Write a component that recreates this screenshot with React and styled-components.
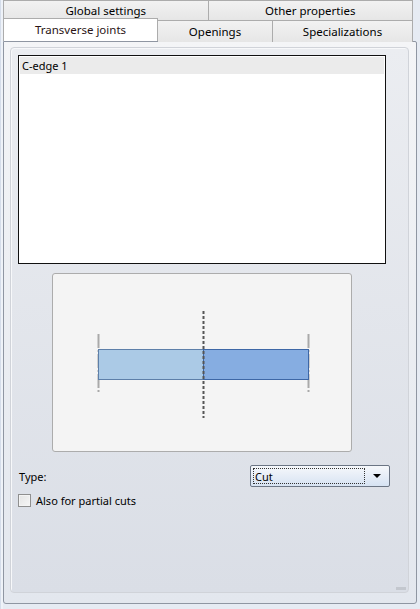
import styled, { createGlobalStyle } from 'styled-components';

const Global = createGlobalStyle`
  html, body { margin: 0; padding: 0; }
  body {
    width: 420px;
    height: 609px;
    overflow: hidden;
    background: #e4e9f2;
    font-family: "Noto Sans", "Open Sans", sans-serif;
    font-size: 11px;
    color: #000;
  }
`;

const Window = styled.div`
  width: 420px;
  height: 609px;
  box-sizing: border-box;
  padding: 0 3px 5px 3px;
  display: flex;
  flex-direction: column;
  background: linear-gradient(to right, #d5ddea 0, #d5ddea 1px, #eef2f8 1px, #eef2f8 3px, #e6ebf3 3px);
`;

const TabRow = styled.div`
  display: flex;
  height: ${p => p.$h}px;
  position: relative;
  z-index: ${p => p.$z || 0};
  margin-right: 4px;
`;

const Tab = styled.div`
  box-sizing: border-box;
  flex: ${p => (p.$w ? `0 0 ${p.$w}px` : '1')};
  display: flex;
  align-items: center;
  justify-content: center;
  border: 1px solid #acacac;
  border-left-width: ${p => (p.$first ? 1 : 0)}px;
  border-bottom: none;
  background: linear-gradient(#f2f2f2, #e6e6e6);
  line-height: 1;
  padding-top: 1px;
  white-space: nowrap;
  font-size: 11.5px;
`;

const ActiveTab = styled(Tab)`
  background: #fff;
  height: 23px;
  margin-top: -2px;
  border-left-width: 1px;
  color: #2a1414;
  padding-top: 0;
  position: relative;
  z-index: 2;
  align-self: flex-start;
`;

const Page = styled.div`
  flex: 1;
  margin-top: -1px;
  border: 1px solid #8f96a2;
  border-radius: 0 2px 3px 3px;
  background: linear-gradient(#f4f5f7, #e3e7ee);
  padding: 5px 7px 10px 6px;
  display: flex;
  position: relative;
  z-index: 1;
`;

const GroupBox = styled.div`
  flex: 1;
  border: 1px solid #d0d3d9;
  border-radius: 4px;
  background: linear-gradient(#ebedf1, #dadee6);
  box-shadow: inset 1px 1px 0 #f7f8fa;
  padding: 7px 0 0 7px;
  display: flex;
  flex-direction: column;
  position: relative;
`;

const ListBox = styled.div`
  width: 368px;
  height: 209px;
  box-sizing: border-box;
  border: 1px solid #111;
  background: #fff;
  padding: 1px;
`;

const ListItem = styled.div`
  height: 17px;
  line-height: 17px;
  padding-left: 2px;
  background: #ebebeb;
`;

const Preview = styled.div`
  width: 300px;
  height: 179px;
  box-sizing: border-box;
  margin: 9px 0 0 34px;
  border: 1px solid #acacac;
  border-radius: 3px;
  background: #f4f4f4;
  display: flex;
`;

const FieldRow = styled.div`
  display: flex;
  align-items: center;
  justify-content: space-between;
  width: 372px;
  margin-top: 13px;
  height: 22px;
  padding-left: 1px;
  box-sizing: border-box;
`;

const Combo = styled.div`
  flex: 0 0 140px;
  height: 22px;
  box-sizing: border-box;
  border: 1px solid #6b7584;
  border-radius: 2px;
  background: linear-gradient(#f6f8fb, #e8eef7 45%, #d6e3f3);
  display: flex;
  align-items: center;
  padding: 2px;
`;

const ComboText = styled.div`
  flex: 1;
  height: 16px;
  box-sizing: border-box;
  border: 1px dotted #333;
  line-height: 15px;
  padding-left: 1px;
`;

const Arrow = styled.div`
  width: 0;
  height: 0;
  margin: 0 6px 0 8px;
  border-left: 4px solid transparent;
  border-right: 4px solid transparent;
  border-top: 4px solid #000;
`;

const CheckRow = styled.label`
  display: flex;
  align-items: center;
  gap: 5px;
  margin-top: 6px;
  height: 14px;
`;

const Box = styled.span`
  width: 13px;
  height: 13px;
  box-sizing: border-box;
  border: 1px solid #8f8f8f;
  background: linear-gradient(135deg, #e4e4e4, #f6f6f6);
  box-shadow: inset 0 0 0 1px #f4f4f4;
`;

const Grip = styled.div`
  position: absolute;
  right: 2px;
  bottom: 2px;
  width: 10px;
  height: 3px;
  background: radial-gradient(circle, #c3c7ce 0.8px, transparent 1px) 0 0 / 2px 2px;
`;

function JointDrawing() {
  return (
    <svg width="298" height="177" viewBox="0 0 298 177">
      <line x1="45.5" y1="60" x2="45.5" y2="120" stroke="#a9a9a9" strokeWidth="2" strokeDasharray="14 2 2 2" />
      <line x1="255.5" y1="60" x2="255.5" y2="120" stroke="#a9a9a9" strokeWidth="2" strokeDasharray="14 2 2 2" />
      <rect x="45.5" y="75.5" width="105" height="30" fill="#abcae6" stroke="#5d7fa9" strokeWidth="1" />
      <rect x="150.5" y="75.5" width="105" height="30" fill="#86ade1" stroke="#3d67a6" strokeWidth="1" />
      <line x1="150.5" y1="37" x2="150.5" y2="144" stroke="#555" strokeWidth="2" strokeDasharray="3 2" />
    </svg>
  );
}

export default function App() {
  return (
    <>
      <Global />
      <Window>
        <TabRow $h={20}>
          <Tab $first>Global settings</Tab>
          <Tab>Other properties</Tab>
        </TabRow>
        <TabRow $h={22} $z={2}>
          <ActiveTab $w={155}>Transverse joints</ActiveTab>
          <Tab $w={115}>Openings</Tab>
          <Tab>Specializations</Tab>
        </TabRow>
        <Page>
          <GroupBox>
            <ListBox>
              <ListItem>C-edge 1</ListItem>
            </ListBox>
            <Preview>
              <JointDrawing />
            </Preview>
            <FieldRow>
              <span>Type:</span>
              <Combo>
                <ComboText>Cut</ComboText>
                <Arrow />
              </Combo>
            </FieldRow>
            <CheckRow>
              <Box />
              Also for partial cuts
            </CheckRow>
            <Grip />
          </GroupBox>
        </Page>
      </Window>
    </>
  );
}
